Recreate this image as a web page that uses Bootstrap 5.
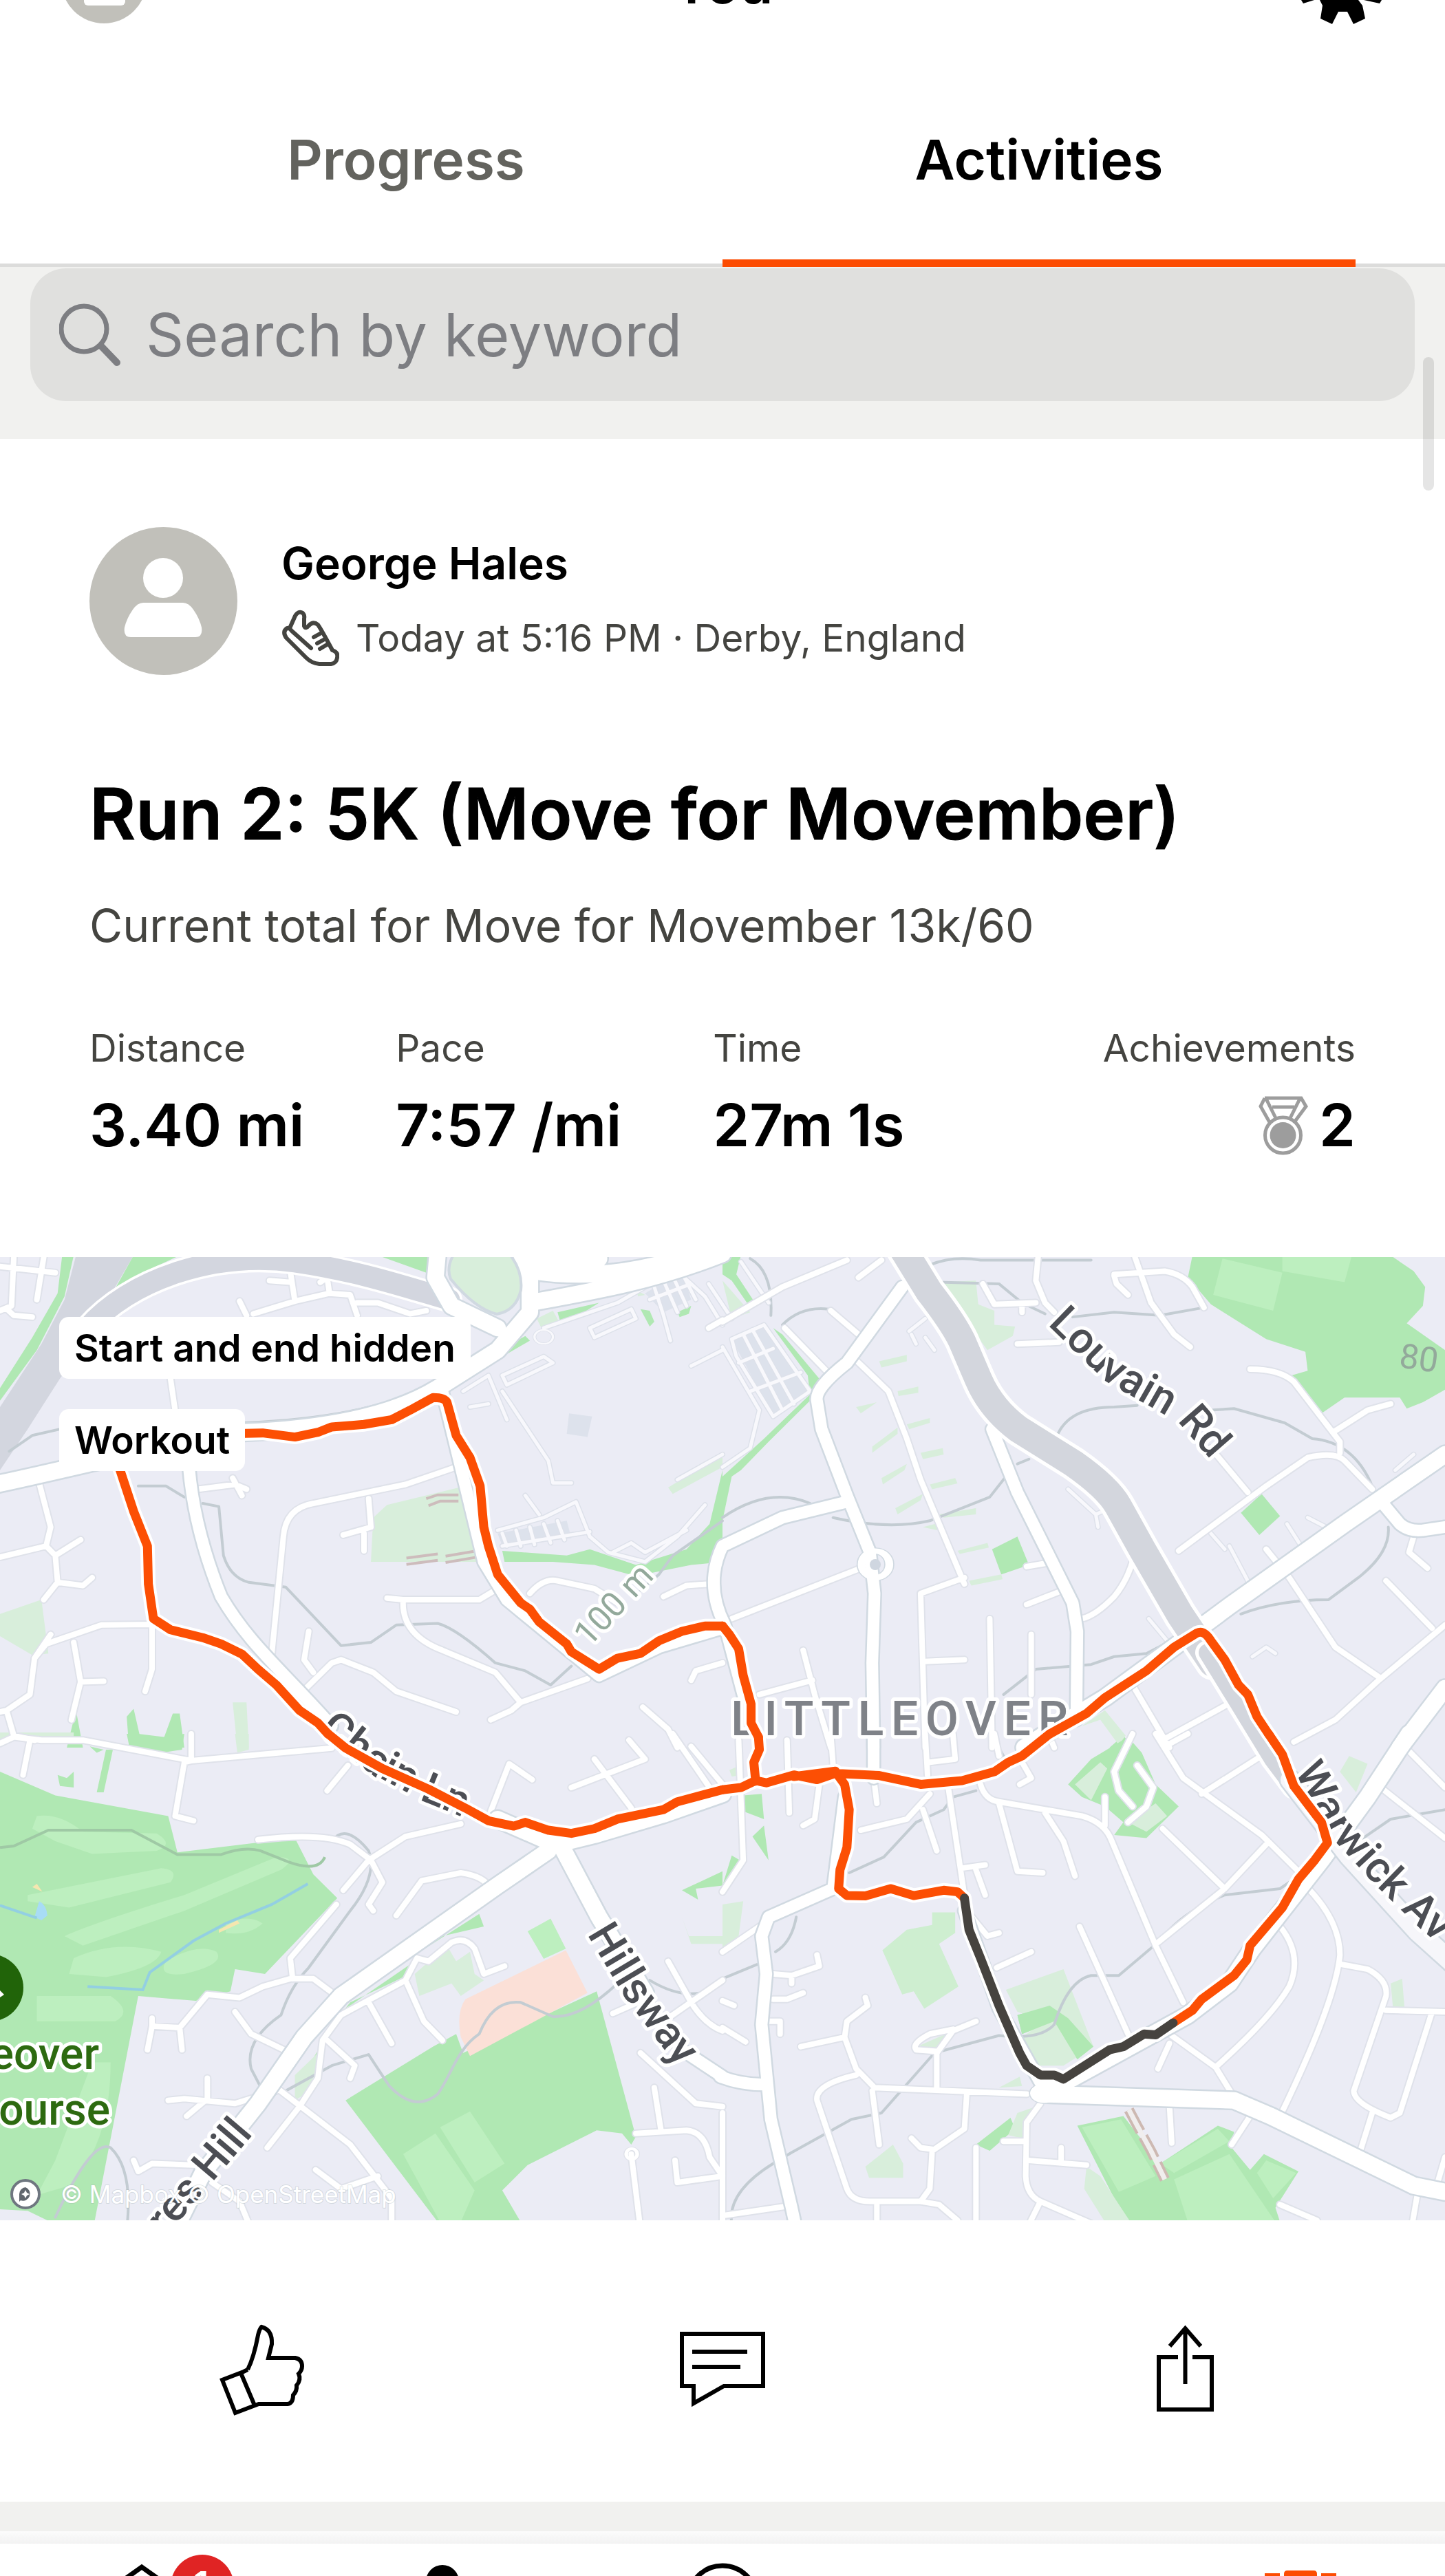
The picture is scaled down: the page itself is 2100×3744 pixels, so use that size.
<!DOCTYPE html>
<html lang="en">
<head>
<meta charset="utf-8">
<meta name="viewport" content="width=device-width, initial-scale=1">
<title>You – Activities</title>
<link href="https://cdn.jsdelivr.net/npm/bootstrap@5.3.0/dist/css/bootstrap.min.css" rel="stylesheet">
<style>
  body { font-family: Inter, "Liberation Sans", sans-serif; color: #000; background: #fff; }
  a { color: inherit; text-decoration: none; }
  .topbar { height: 36px; padding: 0 86px; overflow: hidden; }
  .topbar .side { width: 128px; }
  .screen-title { font-size: 80px; line-height: 80px; font-weight: 600; padding-bottom: 20px; }
  .tabs { padding: 0 130px; border-bottom: 5px solid #dcdcdb; }
  .tabs .nav-link { font-size: 80px; line-height: 100px; font-weight: 600; padding: 146px 0 95px; border-radius: 0; border-bottom: 11px solid transparent; margin-bottom: -5px; color: #63635e; }
  .tabs .nav-link.active { color: #000; border-color: #fc4c02; }
  .search-zone { background: #f1f1ef; padding: 2px 44px 55px; }
  .search-box { background: #e0e0de; border-radius: 52px; padding: 0 42px; height: 193px; color: #7d7e82; }
  .search-box input { border: 0; outline: 0; background: transparent; font-size: 86px; line-height: 110px; padding: 0; margin-left: 36px; min-width: 0; }
  .search-box input::placeholder { color: #7d7e82; opacity: 1; }
  .thumb { position: absolute; right: 16px; top: 519px; width: 16px; height: 194px; border-radius: 8px; background: rgba(0,0,0,.1); }
  .activity { padding: 128px 130px 0; }
  .who { gap: 64px; }
  .who-text { padding-bottom: 10px; }
  .who-name { font-size: 64px; line-height: 100px; font-weight: 600; }
  .meta-line { font-size: 55px; line-height: 72px; color: #444440; }
  .meta-line svg { margin-right: 24px; }
  .run-title { font-size: 103px; line-height: 120px; font-weight: 600; margin: 142px 0 0; -webkit-text-stroke: 1px #000; }
  .run-note { font-size: 66px; line-height: 80px; color: #444440; margin: 62px 0 0; }
  .stats { gap: 133px; margin-top: 100px; padding-bottom: 141px; }
  .stat-label { font-size: 55px; line-height: 76px; color: #444440; }
  .stat-value { font-size: 85px; line-height: 100px; font-weight: 600; margin-top: 25px; }
  .map-wrap { position: relative; }
  .chips { position: absolute; left: 86px; top: 87px; gap: 44px; }
  .chip { background: #fff; border-radius: 14px; padding: 0 22px; font-size: 55px; line-height: 90px; font-weight: 600; }
  .actions { padding: 142px 45px 120px; }
  .actions .btn { padding: 0; border: 0; line-height: 1; }
  .band { height: 43px; background: #f1f1ef; }
  .shade { height: 18px; background: linear-gradient(#fcfcfc, #f2f2f2); }
  .bottom-nav { height: 47px; overflow: hidden; }
  .bottom-nav a { flex: 1 1 0; text-align: center; line-height: 0; }

  .map { display: block; width: 100%; height: auto; background: #ebecf5; }
  .map path { vector-effect: non-scaling-stroke; }
  .lines { fill: none; stroke-linecap: round; stroke-linejoin: round; }
  .park { fill: #b0e8b3; }
  .lawn { fill: #bdefbf; }
  .pale { fill: #d8eedb; }
  .map text { font-family: Roboto, "Noto Sans", sans-serif; paint-order: stroke; stroke: #fff; stroke-width: 10px; stroke-linejoin: round; }
  .road-name { font-size: 63px; font-weight: 500; fill: #4c4e54; }
  .town { font-size: 70px; font-weight: 500; letter-spacing: .15em; fill: #7f8288; }
  .contour-name { font-size: 50px; fill: #93a99b; }
  .poi { font-size: 64px; font-weight: 500; fill: #2d6a10; text-anchor: end; }
  .map text.credit { font-family: Inter, sans-serif; font-size: 35px; fill: #fff; stroke: #9aa; stroke-width: 2px; stroke-opacity: .3; }
</style>
</head>
<body>
<div class="position-relative">

<header class="topbar d-flex justify-content-between align-items-end">
  <div class="side"><svg class="d-block" width="128" height="128" viewBox="0 0 128 128"><circle cx="65" cy="64" r="62" fill="#c1c0ba"/><rect x="36" y="68" width="60" height="32" rx="6" fill="#fff"/></svg></div>
  <div class="screen-title">You</div>
  <div class="side"><svg class="d-block" width="128" height="36" viewBox="0 0 128 36"><path d="M5 0L8 5 24 0ZM32 0H88L94 8 98 27 81 35 72 17H59L50 35 33 27 36 8ZM96 0L119 5 122 0Z"/></svg></div>
</header>

<nav class="tabs nav d-flex text-center">
  <a class="nav-link flex-fill w-50 flex-shrink-1" href="#">Progress</a>
  <a class="nav-link flex-fill w-50 flex-shrink-1 active" href="#" aria-current="page">Activities</a>
</nav>

<section class="search-zone">
  <div class="search-box d-flex align-items-center">
    <label for="q" class="d-flex"><svg width="90" height="92" viewBox="0 0 90 92" fill="none" stroke="currentColor"><circle cx="36" cy="37" r="33" stroke-width="7"/><path d="M61 62L84 86" stroke-width="10" stroke-linecap="round"/></svg><span class="visually-hidden">Search</span></label>
    <input id="q" class="flex-grow-1" type="text" placeholder="Search by keyword">
  </div>
</section>

<main>
<article>
  <div class="activity">
    <div class="who d-flex align-items-center">
      <svg width="215" height="215" viewBox="0 0 215 215"><circle cx="107.500" cy="107.500" r="107.500" fill="#c1c0ba"/><circle cx="107" cy="74" r="29" fill="#fff"/><path d="M78 110H136Q144 110 151 120Q160 133 163 146Q165 160 154 160H60Q49 160 51 146Q54 133 63 120Q70 110 78 110Z" fill="#fff"/></svg>
      <div class="who-text">
        <div class="who-name">George Hales</div>
        <div class="meta-line d-flex align-items-center mt-3"><svg width="84" height="84" viewBox="0 0 84 84" fill="none" stroke="#444440" stroke-width="6" stroke-linejoin="round" stroke-linecap="round"><path d="M12 28L20 10Q25 2 31 6Q34 9 33 14V25Q35 30 40 24Q46 17 53 23Q58 30 74 60Q83 63 81 71Q80 79 72 80H55Q44 79 36 71L7 42Q1 33 8 28Q11 27 15 32L43 57M56 36L47 41M61 45L52 50M66 52L56 58"/></svg><span>Today at 5:16 PM · Derby, England</span></div>
      </div>
    </div>
    <h1 class="run-title">Run 2: 5K (Move for Movember)</h1>
    <p class="run-note">Current total for Move for Movember 13k/60</p>
    <div class="stats d-flex">
      <div><div class="stat-label">Distance</div><div class="stat-value">3.40 mi</div></div>
      <div><div class="stat-label">Pace</div><div class="stat-value">7:57 /mi</div></div>
      <div><div class="stat-label">Time</div><div class="stat-value">27m 1s</div></div>
      <div class="ms-auto text-end"><div class="stat-label">Achievements</div><div class="stat-value d-flex justify-content-end align-items-center gap-3"><svg width="72" height="88" viewBox="0 0 72 88" fill="none" stroke="#9d9d9d" stroke-width="5"><path d="M9 4H62L69 16 52 39M9 4L3 16 16 39M11 5L25 33M60 5L46 33M20 17H52"/><circle cx="35.500" cy="58" r="26"/><circle cx="35.500" cy="58" r="19" fill="#9d9d9d" stroke="none"/></svg><span>2</span></div></div>
    </div>
  </div>

  <div class="map-wrap">
  <svg class="map" viewBox="0 0 2100 1400" role="img" aria-label="Route map">
    <defs>
      <g id="motorway">
        <g transform="translate(0 -7) scale(.66964 .45918)"><path d="M190 240C280 90 460 -5 640 30C780 60 880 110 975 150"/></g>
      </g>
      <g id="trunk">
        <path d="M1310 -15L1350 50Q1385 95 1398 122L1422 178Q1440 220 1480 250L1560 300Q1610 335 1625 362L1660 425 1715 520 1762 590"/>
      </g>
      <g id="major">
        <g transform="translate(0 -7) scale(.66964 .45918)">
          <path d="M-10 735C200 670 400 590 530 570C700 560 850 520 950 430L1080 310 1150 190 1150 90 1130 0M950 0L945 80 980 170 1080 240M1150 160C1300 120 1420 90 1568 5M1160 60C1300 90 1420 50 1520 0M1140 20L1300 20"/>
        </g>
        <g transform="translate(1050 -7) scale(.66964 .45918)">
          <path d="M1568 640L1350 860 1100 1120 980 1250 830 1410 700 1525 655 1568M1568 1380L1470 1568"/>
        </g>
        <g transform="translate(0 693) scale(.66964 .45918)">
          <path d="M1568 190L1440 255 1290 320 1205 350 1080 270M1190 370L1080 480 740 830 660 960 560 1170 440 1390 380 1568M1220 360L1300 580 1400 820"/>
        </g>
        <g transform="translate(1050 693) scale(.66964 .45918)">
          <path d="M1150 680L1100 790 1010 890 760 1090 700 1130M700 1140L1110 1160 1190 1210 1500 1430 1568 1450M1490 0L1400 200 1300 400 1150 680"/>
        </g>
      </g>
      <g id="street">
        <g transform="translate(0 -7) scale(.66964 .45918)">
          <path d="M410 680C420 850 455 1000 480 1090C540 1240 610 1320 720 1500M960 440L1000 680 1050 980 1100 1100 1300 1340 1430 1250 1568 1190"/>
        </g>
        <g transform="translate(1050 -7) scale(.66964 .45918)">
          <path d="M390 110L270 350Q200 430 205 470L215 560 270 770 320 950 330 1080 325 1300 328 1568M270 790L130 840 0 930Q-40 1050 5 1180L45 1400M585 560L640 760 760 1110 770 1200 768 1480M1430 790L1470 860Q1490 885 1520 880L1568 870"/>
          <ellipse cx="332" cy="988" rx="30" ry="42"/>
        </g>
        <g transform="translate(0 693) scale(.66964 .45918)"><path d="M1380 800L1480 1000 1568 1085"/></g>
        <g transform="translate(1050 693) scale(.66964 .45918)">
          <path d="M328 0V140M265 200L240 490 100 580 85 640 95 760 85 920 105 1220 150 1500 160 1568M-5 1085Q40 1110 90 1110M525 560L600 870 700 1130"/>
          <circle cx="698" cy="1138" r="22"/>
        </g>
      </g>
      <g id="lane">
        <g transform="translate(0 -7) scale(.66964 .45918)">
          <path d="M30 15L25 170 0 185M95 15L80 150M0 45L120 65M15 180L30 200 70 205M630 60L640 155M585 90L630 95M550 195L640 155 715 130 710 80 695 95M715 130L760 135 775 200M775 160L820 160 890 195 925 185M520 155L535 200M370 400L380 500M430 750L510 735 535 750M505 715L525 770M85 730L110 870 100 930 0 965M100 930L120 960 125 1045 95 1100M120 960L175 910M125 1045L180 1055 200 1030M75 1285L100 1240 220 1180 330 1178M110 1210L75 1285 65 1400 15 1450 0 1455M160 1235L175 1360 155 1480M175 1360L225 1358M330 1180L330 1320 315 1390M15 1455L30 1530 75 1545M1000 675L880 735 680 795Q620 810 615 900L590 1270M800 780L805 870 745 895M790 890V945M650 1400L720 1300 740 1290 810 1330 860 1390 990 1455M670 1200L660 1290 680 1330M840 1095L875 1100 1040 1100 1080 1065M875 1100Q870 1210 960 1260L1075 1330 1130 1425 1275 1350M1130 1425L1110 1450 1065 1480M1150 1080Q1180 1030 1210 1040L1290 1065 1340 1110M1440 1090L1490 1055 1540 1050M1500 1355L1510 1325 1568 1300M1395 1440L1450 1510 1470 1568"/>
        </g>
        <g transform="translate(1050 -7) scale(.66964 .45918)">
          <path d="M0 220L130 110 270 25M295 80L345 25M0 215L-30 240M135 240L235 390M235 185L295 260M285 335L360 440 400 590 430 720 525 1050M525 1030L430 1080 440 1568M300 1000L20 1160M685 15L680 90 700 160 720 190M565 100L590 165 680 160M650 165V190M640 290L730 285M895 15L930 160 980 260 1015 300M850 70L960 60Q1000 70 1020 110L1045 175M850 75L855 100 880 135M1145 370Q1210 370 1240 410L1340 600V635M1325 570L1400 500 1450 480M1060 620L1140 760M990 945L1180 740 1270 650Q1330 630 1350 660L1410 750M1180 940L1230 1030 1330 1250 1425 1345M1440 1040L1540 1190M1568 1180L1420 1360 1330 1480 1240 1550M1500 900L1490 950 1530 1000M900 910Q890 1020 850 1090Q810 1150 780 1160M730 1075L660 1115M700 985L660 995M175 1260L200 1400 235 1568M80 1400L195 1355M440 1295L525 1290M580 1160L585 1568M670 1210V1400M890 1370L970 1568M960 1540L1110 1420M700 1500L720 1568M1568 640L1520 700"/>
        </g>
        <g transform="translate(0 693) scale(.66964 .45918)">
          <path d="M0 30L30 10 90 20 180 20 415 85 720 45M415 0V85L400 90 380 260 420 275M65 20L50 130M755 100L710 180M1000 285L880 325 800 400 745 495M560 335Q700 310 760 350L805 400 830 470 800 540 810 560M860 575L915 465 1000 440Q1050 450 1065 490M730 540L630 710 635 775M735 835L680 775H630L570 800 520 835 450 825 390 930 330 925 320 1000M390 930L395 1000M330 900V925M905 710L930 720 980 660Q1010 640 1030 680L1050 760 1095 735M905 710L880 780 740 890 700 970 690 1090 650 1180 580 1310M880 780L920 910 960 970M800 850L850 980M710 970L770 1050 760 1090M510 880L545 950 630 1010M600 1120L760 1300 850 1470V1568M365 1160L400 1155 510 1170 600 1130M450 1090V1155L405 1210M290 1350L300 1385 330 1360 420 1365M685 1380L740 1440 820 1400M1065 245L1105 95 1155 145M1290 80L1370 235M1240 170L1400 80 1365 20M1460 0L1540 170M1500 40L1568 160M1370 1330L1390 1568M1380 1265L1490 1255Q1530 1260 1540 1340L1568 1400M1420 1120L1435 1260M1465 1350L1470 1420 1568 1400M1450 720L1500 850Q1530 920 1568 940M1330 885L1400 840M1450 900L1568 780M1390 1010L1510 1170 1568 1180M460 1420L520 1480 545 1568"/>
          <ellipse cx="1371" cy="1330" rx="12" ry="17"/>
        </g>
        <g transform="translate(1050 693) scale(.66964 .45918)">
          <path d="M0 690L80 610M35 20L45 400 0 500M140 20L145 250M210 160L200 270 175 290M235 0L240 100M330 160L335 220M440 0L445 130M500 0L505 80 450 90M300 305L400 270 450 190M435 240L465 370M490 170L530 560 575 640 600 630M520 425L570 415M550 430L570 510M560 160Q570 210 600 215L780 260Q830 280 845 340L940 670 1000 850M600 220L640 435 695 440M700 250L740 340 765 450M590 0L600 70M650 90L670 140 645 160M940 0L1000 140 1170 320 1260 450M960 40L1010 0M1040 190L1180 60M945 660L1090 490 1180 350M955 300L1090 490M775 610L880 950M595 740L670 690M1210 610Q1260 700 1230 800Q1190 900 1070 1055M1265 480Q1340 590 1340 700Q1330 850 1210 1210M1345 730L1400 745Q1445 780 1440 830L1370 1130Q1370 1170 1450 1215L1470 1200 1540 880M1440 875L1568 880M1410 1200L1380 1340M970 950L1070 1055 1110 1150M970 980L945 1060M1480 40L1568 170M1420 160L1568 330M1510 1440L1495 1568M110 760L150 765 210 735 205 700M150 765V790M110 840L140 840 175 820M0 845L25 860M170 990L265 960 270 910 315 860 310 835M265 960L290 1060 330 1120 660 1140M290 1080Q200 1110 205 1160L270 1440Q280 1480 320 1480H430L450 1440 455 1320 525 1250 530 1140M325 1130L340 1300M410 1280L430 1310 455 1315M550 1310V1568M690 1170L660 1230 658 1400Q660 1460 690 1480L800 1550M665 1350L790 1365M735 1310V1350M690 1480L660 1568M610 1290H655M430 1480L470 1490 510 1540M335 1490V1568M0 1525L140 1495M465 1120V1010L500 940 550 910M465 1005L420 1000Q410 980 450 950L500 935M970 1175L975 1295M1145 1210L1105 1300M830 200V290M900 100L935 170 920 230 880 280M890 0L850 120 860 180 890 230M0 930L50 975M100 910H125V950M1210 1490L1290 1540M0 1200V1568M1568 1340L1550 1430"/>
        </g>
      </g>
      <g id="lots">
        <g transform="translate(0 -7) scale(.66964 .45918)"><path d="M1180 240L1340 160 1400 110 1470 60 1530 140 1568 230M1280 240L1370 180 1380 210 1290 270ZM1090 390L1180 330 1200 350 1100 420ZM1005 440L1060 390 1100 530M1060 480L1020 490M1090 440L1190 660 1200 730H1240M1420 110L1440 200 1455 280M1440 90L1470 190M1460 75L1490 170M1480 65L1510 150M1410 150L1500 100M1080 880L1180 840 1250 790 1280 900 1320 950 1400 980 1470 900 1530 800M1090 890L1100 930M1120 880L1130 930M1150 870L1160 925M1180 860L1195 920M1210 850L1225 910M1090 930L1280 885M1330 950L1370 920 1400 950 1490 880M1470 720L1568 640M1500 360L1568 310M1140 770L1170 830"/><ellipse cx="1180" cy="268" rx="20" ry="22"/></g>
        <g transform="translate(1050 -7) scale(.66964 .45918)"><path d="M20 275L90 230 190 440 110 520 30 330ZM45 260L130 500M65 245L155 480M35 350L110 305M60 440L170 380M-30 100L20 210M0 300L80 500 60 620 0 680M40 30L100 160M405 250L440 210M410 260L420 290M440 270L460 310M750 750L810 830 840 810M810 830L815 870M1060 890L1090 940M1100 930L1140 1040M1225 860L1260 940M1270 840L1310 870M1460 690L1500 640M1150 1280L1180 1250 1200 1270M1070 1300L1110 1400M925 1160L965 1230"/></g>
      </g>
      <g id="contours">
        <g transform="translate(0 -7) scale(.66964 .45918)"><path d="M20 630L70 580 130 560M300 740H360L400 775M440 795L475 805 485 960Q500 1030 540 1045L620 1060 740 1245 805 1235 860 1180 950 1175Q990 1190 1075 1300L1140 1325 1195 1370 1240 1310M1390 1070L1430 1020 1460 960 1568 850M530 540C700 530 850 490 950 410"/></g>
        <g transform="translate(1050 -7) scale(.66964 .45918)"><path d="M0 840Q100 740 190 795M240 840Q360 880 450 850L580 775 615 710M640 670L665 655M725 585Q750 490 850 490L900 485M1060 500L1110 495 1220 540 1280 590Q1370 600 1410 740M1445 870Q1450 950 1380 1030L1315 1100Q1210 1100 1125 1145M610 1400L680 1320 800 1305 850 1280 920 1270 960 1240M130 230Q170 170 230 180M60 20Q110 60 105 200M450 40Q500 10 560 25H800M470 95L600 100 650 160 700 195M760 205L850 190 950 200 1045 175"/></g>
        <g transform="translate(0 693) scale(.66964 .45918)"><path d="M720 340Q750 280 800 370Q820 450 760 560Q700 680 670 740Q630 800 610 890Q530 970 545 1060L570 1130M620 1130L720 1050 800 1015Q820 1060 845 1115Q900 1200 950 1140C980 1080 990 1000 1040 950Q1070 840 1130 850L1200 895Q1260 900 1340 790M1410 780Q1500 860 1568 790M120 1530Q200 1280 240 1310Q290 1380 275 1568"/></g>
        <g transform="translate(1050 693) scale(.66964 .45918)"><path d="M275 440L350 390 420 280 480 240 500 200 550 180M115 690Q150 660 160 580M0 775L75 730M20 1550Q10 1450 110 1360L150 1325 280 1220 345 1200 460 1010 600 955Q690 970 720 920Q750 780 800 765L860 765 945 660Q1000 560 1090 510L1210 490 1240 460M1390 330L1450 270 1568 240M590 20L610 70"/></g>
      </g>
      <g id="route">
        <g transform="translate(0 -7) scale(.66964 .45918)"><path d="M480 575L570 572 640 585 690 570 720 553 790 545 850 530 890 500 940 460Q965 460 970 475L990 580 1020 650 1042 740 1050 870 1060 930 1080 1020 1130 1110 1150 1130 1170 1170 1230 1240 1240 1265 1300 1320 1340 1285 1390 1270 1430 1230 1480 1200 1530 1183 1568 1183M255 665L290 820 320 930 322 1050 333 1160 370 1195 440 1220 480 1240 525 1272 560 1320 600 1370 650 1450 690 1490 712 1525"/></g>
        <g transform="translate(1050 -7) scale(.66964 .45918)"><path d="M0 1183L15 1210 35 1255 45 1340 62 1430 62 1490 78 1535M710 1525L790 1460 830 1410 920 1325 980 1250 1030 1205Q1045 1195 1060 1230L1090 1290 1120 1370 1140 1400 1160 1470 1185 1525"/></g>
        <g transform="translate(0 693) scale(.66964 .45918)"><path d="M712 0L750 45 830 110 930 175 1010 235 1060 275 1115 292 1140 280 1190 305 1240 315 1290 300 1340 270 1440 240 1470 215 1568 177"/></g>
        <g transform="translate(1050 693) scale(.66964 .45918)"><path d="M78 10L80 50 68 90 72 150M0 177L40 170 72 148 95 155 155 130 205 145 245 125 340 132 430 160 520 148 590 120 620 90 650 70 710 0M155 135L245 118M1185 0L1215 65 1240 165 1300 280 1313 345 1285 400 1250 460 1215 550 1145 670 1138 715 1110 765 1040 840 1020 875 978 915M525 520L510 500 480 495 415 512 365 490 310 513 270 512 252 490 255 430 270 360 275 240 265 160 250 130"/></g>
      </g>
      <g id="lap"><g transform="translate(1050 693) scale(.66964 .45918)"><path d="M978 915L940 953 915 950 870 990 840 1000 740 1093 720 1080 690 1080 660 1050 645 1010 600 860 560 710 535 620 525 520"/></g></g>
      <path id="pLouvain" d="M1522 98L1606 180 1683 224 1714 242 1760 295 1800 340"/>
      <path id="pWarwick" d="M1880 748L1930 838 2000 914 2060 972 2160 1060"/>
      <path id="pChain" d="M462 690L535 748 620 793 760 850"/>
      <path id="pHillsway" d="M853 984L908 1076 970 1158 1060 1260"/>
      <path id="pHill" d="M241 1424L425 1208"/>
    </defs>

    <!-- land cover -->
    <g transform="translate(0 -7) scale(.66964 .45918)">
      <path fill="#d3d6df" d="M165 10H290L250 110 235 190 130 400 60 560 0 690V490L90 290 140 150Z"/>
      <path class="park" d="M135 10H160L140 140 80 310 0 470V430L70 270 125 130ZM290 10H390L310 65 250 115ZM820 10H930L925 65ZM1210 190L1300 160 1240 215H1215ZM1140 265L1150 280 1020 390 1060 330ZM1390 180L1410 185 1420 220 1410 235ZM1470 190L1500 170 1495 195 1475 205ZM1090 945L1230 960 1280 940 1380 990 1490 940 1540 860 1568 690V980L1500 990 1380 1025 1290 990 1200 980 1095 980ZM275 1470L290 1445 305 1540H355L375 1460H390L400 1568H280ZM165 1450L180 1568H145Z"/>
      <path class="pale" d="M1165 210L1200 185 1215 225 1175 240ZM840 800L1010 740 1040 980H805L810 840ZM0 1145L90 1100 105 1270 70 1275 0 1215ZM505 1425H535L540 1568H515ZM1450 745L1568 640V680L1460 765ZM0 1520H160V1540H0ZM1380 120L1400 135 1385 140Z"/>
      <path fill="#dde2ec" d="M1235 510L1285 520 1275 585 1230 575ZM1080 890L1230 850 1240 905 1090 930ZM1400 130L1480 60 1500 150 1440 190Z"/>
    </g>
    <g transform="translate(1050 -7) scale(.66964 .45918)">
      <path class="park" d="M0 10H40L30 70 75 170 60 175 20 90 0 70ZM1020 10H1450L1500 60 1525 110 1520 170 1485 225 1568 310V435L1520 475 1485 495 1470 460 1350 460 1300 510 1235 390 1270 375 1265 315 1180 275 1060 165 1010 80ZM110 240L130 260 210 400 190 470 100 600 40 690 20 710 0 850V710L90 590 190 450 185 390ZM585 940L640 900 665 990 605 1020ZM1125 825L1170 765 1210 835 1165 895ZM840 1568L870 1530 890 1568Z"/>
      <path class="lawn" d="M1085 20L1215 65 1195 185 1065 135ZM1215 15H1365L1350 95 1215 60Z"/>
      <path class="pale" d="M475 95L550 90 555 165 590 185V230L635 235 630 265 575 310 530 220ZM340 345L400 325V345L345 365ZM380 440L425 425V445L382 455ZM290 490L335 475 300 510ZM325 615L380 555V575L325 635ZM400 545L450 525V540L405 560ZM430 635L478 620 480 640 435 655ZM345 715L400 670 395 690 348 735ZM450 735L505 715 510 732 455 750ZM375 810L435 765 430 785 380 830ZM470 830L550 810V830L480 840ZM510 945L575 920 578 935 515 955ZM535 1040L605 1020 608 1035 540 1055ZM435 870L475 855 465 880ZM780 1500L830 1450 875 1530 860 1560 820 1480ZM0 90L60 190 20 210Z"/>
      <path fill="#dde2ec" d="M20 275L90 230 190 440 110 520Z"/>
    </g>
    <g transform="translate(0 693) scale(.66964 .45918)">
      <path class="park" d="M0 120L120 195 365 260 385 375 640 330 680 445 732 520 575 760 510 745 500 815 425 845 300 830 205 1545H110L60 1510 0 1505ZM275 0L280 35 350 60 395 50 400 0 355 10 300 0ZM230 50H245L225 185H210ZM125 130L145 140 160 120V170L130 165ZM195 40L225 50 210 60ZM940 990L990 950 1005 1010 1295 815 1380 1275 1370 1300 1350 1265 1295 1255 1145 1365 1090 1445 1130 1545H950L750 1160ZM740 880L900 720 890 760 760 850 700 960 690 1060 650 1100ZM900 700L1040 570 1050 610 960 640ZM1480 495L1568 435V480L1510 490 1515 525Z"/>
      <path class="lawn" d="M80 260Q130 250 180 310L340 315Q380 350 340 370L200 380 120 340 70 300ZM60 510L350 425Q390 430 370 470L150 550 60 530ZM140 640Q200 600 400 510L600 390Q650 390 610 430L400 560 180 670ZM160 710Q250 650 350 690 340 740 230 770L150 760ZM360 720Q430 660 470 690 490 730 400 760 340 770 360 720ZM80 830H240Q290 880 250 910H80ZM200 1040H240Q240 1300 150 1430L80 1460 120 1350ZM875 1330L945 1265 1030 1445 1000 1545H955ZM955 1245L1020 1195 1095 1360 1030 1420ZM1145 625L1195 585 1228 680 1180 712ZM490 600Q540 570 570 600 540 640 490 630Z"/>
      <path class="pale" d="M900 760L970 670 990 720 1020 690 1030 760 1050 780 1000 830 980 790 910 830ZM640 1080L690 1010 685 1120 640 1160ZM1480 580L1495 640 1568 640V665H1500ZM510 0H540V50L515 60ZM60 0H120V30H60Z"/>
      <path fill="#fbe0d7" d="M1228 685L1275 820 1020 1020 1000 960Q990 880 1010 840Z"/>
      <path fill="#a8dcf5" d="M85 530Q100 540 103 575L90 590 75 580Z"/>
      <path fill="#f5e6b0" d="M475 620L515 590 520 600 475 630ZM70 485L80 475 92 500Z"/>
      <path fill="none" stroke="#93cfe2" stroke-width="4" d="M0 543L80 583M668 475L590 540 490 600 420 655 325 755 310 810 190 800"/>
      <path fill="none" stroke="#9fc9a5" stroke-width="4" d="M0 360L30 355 105 305H285L385 382H480Q530 355 565 370L625 405Q690 440 705 390"/>
    </g>
    <g transform="translate(1050 693) scale(.66964 .45918)">
      <path class="park" d="M45 195L85 190 90 270 45 245ZM65 325L90 290 100 400ZM20 385L38 400 10 490 0 480ZM750 160L800 80 880 10 910 60 940 160 990 230 920 330 850 320 870 280 830 230 780 200ZM640 890L710 860 750 900 805 990 770 1030 720 910 650 950ZM550 1300L625 1215 635 1250 580 1320ZM770 1240L870 1210 950 1360 1075 1240 1110 1260 1105 1310 1145 1380 1175 1330 1250 1385 1200 1500 1210 1545H885L850 1470Z"/>
      <path class="lawn" d="M950 1360L1075 1250 1100 1290 980 1390ZM980 1410L1100 1330 1200 1545H1010ZM780 1245L865 1220 940 1400 860 1450ZM1160 1390L1180 1350 1245 1390 1195 1470Z"/>
      <path class="pale" d="M765 160L820 90 835 110 800 210ZM880 280L940 220 965 260 920 310ZM615 810L740 745 805 990 740 1050 680 1050 650 960 700 910 640 880ZM600 1120L645 1085 650 1115ZM640 1200L680 1180 650 1280 620 1270ZM310 1370L370 1300 392 1360V1405H318ZM790 1370L820 1400 885 1545H830L785 1440ZM430 985L500 940 480 990 425 1000ZM0 540L45 530 35 640 0 680ZM1340 120L1360 70 1400 95 1375 185ZM1450 790L1475 775 1480 865H1455ZM15 115L45 95V130L20 135Z"/>
      <path class="park" d="M640 890L710 860 750 900 805 990 770 1030 720 910 650 950Z"/>
      <path fill="#ceeed0" d="M455 565H505V630L470 665 512 800 438 870 415 815 390 825 347 685 400 620 455 605Z"/>
      <path fill="none" stroke="#cdb9b2" stroke-width="15" stroke-dasharray="36 8" d="M882 1190L900 1240 930 1320 960 1410"/>
      <path fill="none" stroke="#f0eeee" stroke-width="7" d="M882 1190L900 1240 930 1320 960 1410"/>
    </g>
    <g transform="translate(0 -7) scale(.66964 .45918)"><path fill="none" stroke="#cdbcbc" stroke-width="4" d="M925 780L950 768H995M930 802L955 788H995M882 968L950 955M882 988L950 975M967 962L1035 945M967 982L1035 965"/></g>

    <!-- road network -->
    <g class="lines">
      <use href="#contours" stroke="#c3ccd2" stroke-width="4"/>
      <use href="#lots" stroke="#dde1ea" stroke-width="8"/>
      <use href="#lots" stroke="#f8f8fc" stroke-width="5"/>
      <use href="#lane" stroke="#dfe2ea" stroke-width="12"/>
      <use href="#lane" stroke="#fff" stroke-width="8"/>
      <use href="#motorway" stroke="#fff" stroke-width="38"/>
      <use href="#motorway" stroke="#d3d6df" stroke-width="31"/>
      <use href="#street" stroke="#d0d9e1" stroke-width="22"/>
      <use href="#major" stroke="#d0d9e1" stroke-width="29"/>
      <use href="#street" stroke="#fff" stroke-width="17"/>
      <use href="#major" stroke="#fff" stroke-width="24"/>
      <use href="#trunk" stroke="#fff" stroke-width="50"/>
      <use href="#trunk" stroke="#d3d6dd" stroke-width="40"/>
      <path d="M1755 575L1795 640 1850 730 1880 770" stroke="#fff" stroke-width="36"/>
      <path d="M1755 575L1795 640 1850 730 1880 770" stroke="#d3d6dd" stroke-width="26"/>
      <path d="M1875 760L1960 870 2060 980 2110 1025" stroke="#d0d9e1" stroke-width="33"/>
      <path d="M1875 760L1960 870 2060 980 2110 1025" stroke="#f6f6fa" stroke-width="28"/>
    </g>
    <circle cx="1272" cy="447" r="8" fill="#cfd6e0"/>
    <path d="M660 -5H740Q760 20 757 48Q750 78 722 83Q690 75 655 32Q648 15 660 -5Z" fill="#d8eedb" stroke="#d0d9e1" stroke-width="4"/>

    <!-- names -->
    <text class="road-name"><textPath href="#pLouvain">Louvain Rd</textPath></text>
    <text class="road-name"><textPath href="#pWarwick">Warwick Av</textPath></text>
    <text class="road-name"><textPath href="#pChain">Chain Ln</textPath></text>
    <text class="road-name"><textPath href="#pHillsway">Hillsway</textPath></text>
    <text class="road-name"><textPath href="#pHill">res Hill</textPath></text>
    <text class="town" x="1062" y="695">LITTLEOVER</text>
    <text class="contour-name" transform="translate(856 568) rotate(-47)">100 m</text>
    <text class="contour-name" style="stroke:none" transform="translate(2032 160) rotate(8)">80</text>
    <circle cx="-15" cy="1062" r="49" fill="#216409"/>
    <path d="M0 1066L6 1072 0 1076Z" fill="#fff"/>
    <text class="poi" x="144" y="1180">eover</text>
    <text class="poi" x="160" y="1261">ourse</text>

    <!-- recorded track -->
    <g class="lines">
      <use href="#route" stroke="#fff" stroke-width="21"/>
      <use href="#lap" stroke="#fff" stroke-width="21"/>
      <use href="#route" stroke="#fc4f04" stroke-width="13"/>
      <use href="#lap" stroke="#46433f" stroke-width="13"/>
    </g>

    <circle cx="37" cy="1362" r="20" fill="#fff" stroke="#6f7780" stroke-width="4"/>
    <path d="M37 1352A10 10 0 1 1 30 1371L28 1373V1362A10 10 0 0 1 37 1352Z" fill="#60666e"/>
    <path d="M37 1356L39 1360 43 1362 39 1364 37 1368 35 1364 31 1362 35 1360Z" fill="#fff"/>
    <text class="credit" x="88" y="1375">© Mapbox © OpenStreetMap</text>
  </svg>
  <div class="chips d-flex flex-column align-items-start">
    <div class="chip">Start and end hidden</div>
    <div class="chip">Workout</div>
  </div>
  </div>

  <div class="actions row g-0 text-center">
    <div class="col"><button class="btn" type="button" aria-label="Give kudos"><svg width="132" height="147" viewBox="0 0 132 147" fill="none" stroke="#000" stroke-width="6"><path d="M46 75Q55 57 61 25Q63 16 66 13Q82 17 81 38L76 58H115Q125 60 125 70Q125 76 120 81Q124 90 117 98Q118 106 112 112Q112 124 104 125H62L28 138 9 90 40 78Q44 76 46 75M36 80L56 127"/></svg></button></div>
    <div class="col"><button class="btn" type="button" aria-label="Comment"><svg width="132" height="147" viewBox="0 0 132 147" fill="none" stroke="#000" stroke-width="6"><path d="M7 23H125V99H68L24 124V99H7ZM22 49H102M22 71H92"/></svg></button></div>
    <div class="col"><button class="btn" type="button" aria-label="Share"><svg width="132" height="147" viewBox="0 0 132 147" fill="none" stroke="#000" stroke-width="6"><path d="M58 57H30V133H107V57H79M68.500 96V15M46 41L68.500 15 91 41"/></svg></button></div>
  </div>
</article>
</main>

<div class="band"></div>
<div class="shade"></div>
<nav class="bottom-nav d-flex">
  <a href="#" aria-label="Home"><svg width="264" height="47" viewBox="78 0 264 47"><path d="M168 61L206 34 244 61" fill="none" stroke="#000" stroke-width="7"/><circle cx="294" cy="62" r="46" fill="#e02424"/><text x="292" y="76" text-anchor="middle" font-size="50" font-weight="700" fill="#fff">1</text></svg></a>
  <a href="#" aria-label="Maps"><svg width="120" height="47" viewBox="0 0 120 47"><circle cx="73" cy="55" r="24"/></svg></a>
  <a href="#" aria-label="Record"><svg width="120" height="47" viewBox="0 0 120 47"><circle cx="60" cy="82" r="50" fill="none" stroke="#000" stroke-width="7"/></svg></a>
  <a href="#" aria-label="Groups"></a>
  <a href="#" aria-label="You"><svg width="120" height="47" viewBox="0 0 120 47"><path d="M8 43H30V60H8ZM36 60V44Q36 39 41 39H79Q84 39 84 44V60ZM90 43H112V60H90Z" fill="#fc4c02"/></svg></a>
</nav>
<div class="thumb" aria-hidden="true"></div>
</div>
<script src="https://cdn.jsdelivr.net/npm/bootstrap@5.3.0/dist/js/bootstrap.bundle.min.js"></script>
</body>
</html>
